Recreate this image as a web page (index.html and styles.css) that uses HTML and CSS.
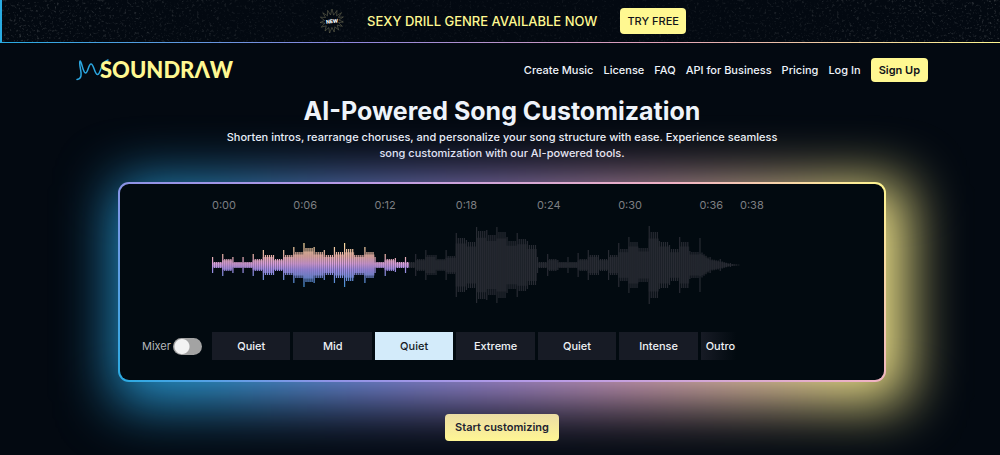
FILE: index.html
```html
<!DOCTYPE html>
<html lang="en">
<head>
  <meta charset="utf-8">
  <meta name="viewport" content="width=device-width, initial-scale=1">
  <title>Soundraw – AI-Powered Song Customization</title>
  <link rel="stylesheet" href="styles.css">
</head>
<body>
  <aside class="banner">
    <svg class="banner-stars" aria-hidden="true">
      <filter id="stars" x="0" y="0" width="100%" height="100%">
        <feTurbulence type="fractalNoise" baseFrequency="0.4" numOctaves="3" seed="8"/>
        <feColorMatrix values="0 0 0 0 0.7  0 0 0 0 0.72  0 0 0 0 0.7  2.6 1.4 0 0 -2.2"/>
      </filter>
      <rect width="100%" height="100%" filter="url(#stars)"/>
    </svg>
    <svg class="badge" viewBox="0 0 26 26" aria-label="New">
      <path d="M13 1l1.6 6.2L18 2.400l-.4 5.400 5-3.200-3.200 4.700 5-.4-4.400 3.100 4.400 2-4.900.6 3.900 3.700-5.200-1.100 1.500 4.800-3.900-3.200-.6 5.200-2.200-4.500L10.500 25l-.6-5.400L6 23l1.300-5.200-5.100 1.400 3.700-4L1 14.500l4.600-2L1.400 9.200l5.200.3L3.800 4.800l4.700 3L8.600 2.400l2.900 4.500z"/>
      <text x="13" y="15" transform="rotate(-6 13 13)">NEW</text>
    </svg>
    <p class="banner-text">SEXY DRILL GENRE AVAILABLE NOW</p>
    <button class="btn btn-banner" type="button">TRY FREE</button>
  </aside>

  <header class="header">
    <a class="logo" href="#" aria-label="Soundraw">
      <svg class="logo-wave" viewBox="0 0 34 22" aria-hidden="true">
        <path d="M1 20.500C6 20 5.500 15 4.500 10C3.500 5 3.500 2 4.200 2C5.500 2 7 14 9.500 14C12 14 12.500 5 15 5C18 5 18.500 15.500 21.500 15.500C25 15.500 24 4 32 1"/>
      </svg>
      <span class="logo-text">SOUNDRΛW</span>
    </a>
    <nav class="nav">
      <a href="#">Create Music</a>
      <a href="#">License</a>
      <a href="#">FAQ</a>
      <a href="#">API for Business</a>
      <a href="#">Pricing</a>
      <a href="#">Log In</a>
      <a class="btn btn-signup" href="#">Sign Up</a>
    </nav>
  </header>

  <main class="main">
    <h1 class="title">AI-Powered Song Customization</h1>
    <p class="lead">Shorten intros, rearrange choruses, and personalize your song structure with ease. Experience seamless song customization with our AI-powered tools.</p>

    <section class="player">
      <div class="card">
        <div class="times">
          <span>0:00</span><span>0:06</span><span>0:12</span><span>0:18</span><span>0:24</span><span>0:30</span><span>0:36</span><span>0:38</span>
        </div>
        <svg class="wave" viewBox="0 0 529 80" preserveAspectRatio="none" aria-label="Waveform">
          <defs>
            <linearGradient id="tone" gradientUnits="userSpaceOnUse" x1="0" y1="18" x2="0" y2="62">
              <stop offset="0" stop-color="#f8dc9c"/>
              <stop offset="0.3" stop-color="#eab0a8"/>
              <stop offset="0.47" stop-color="#d9a0dc"/>
              <stop offset="0.6" stop-color="#a48ee6"/>
              <stop offset="1" stop-color="#3f8fd0"/>
            </linearGradient>
          </defs>
          <path id="played-fill" class="played fill"/>
          <path id="played-bars" class="played"/>
          <path id="rest-fill" class="rest fill"/>
          <path id="rest-bars" class="rest"/>
        </svg>
        <label class="mixer">Mixer <input class="switch" type="checkbox" role="switch"></label>
        <div class="parts">
          <button class="part" type="button">Quiet</button>
          <button class="part" type="button">Mid</button>
          <button class="part part-active" type="button">Quiet</button>
          <button class="part" type="button">Extreme</button>
          <button class="part" type="button">Quiet</button>
          <button class="part" type="button">Intense</button>
          <button class="part part-last" type="button">Outro</button>
        </div>
      </div>
    </section>

    <button class="btn btn-start" type="button">Start customizing</button>
  </main>
  <script src="wave.js"></script>
</body>
</html>
```

FILE: styles.css
```css
* {
  box-sizing: border-box;
}

body {
  margin: 0;
  background: #030911;
  color: #eef3fa;
  font-family: Inter, "Liberation Sans", sans-serif;
  font-size: 11px;
  line-height: 16px;
}

a {
  color: inherit;
  text-decoration: none;
}

button {
  font: inherit;
  border: 0;
  padding: 0;
  cursor: pointer;
}

.btn {
  background: #fff891;
  color: #10131a;
  border-radius: 4px;
  text-align: center;
}

/* Announcement bar */
.banner {
  position: relative;
  display: flex;
  align-items: center;
  justify-content: center;
  padding: 8px 0 8px 3px;
  border-style: solid;
  border-width: 0 0 1px 2px;
  border-image: linear-gradient(90deg, #29abe2, #8f86dd 35%, #e0a0b8 65%, #fff68f) 1;
}

.banner-stars {
  position: absolute;
  inset: 0;
  width: 100%;
  height: 100%;
  opacity: 0.22;
  mask-image: linear-gradient(90deg, #000, rgba(0, 0, 0, 0.35) 35%, rgba(0, 0, 0, 0.35) 65%, #000);
}

.badge {
  position: relative;
  width: 26px;
  height: 26px;
  margin-right: 22px;
}

.badge path {
  fill: none;
  stroke: #77755a;
  stroke-width: 0.5;
}

.badge text {
  fill: #fff;
  font-size: 5px;
  font-weight: 800;
  text-anchor: middle;
}

.banner-text {
  position: relative;
  margin: 0 23px 0 0;
  color: #fff891;
  font-size: 13px;
  font-weight: 500;
}

.btn-banner {
  position: relative;
  padding: 5px 7px;
  font-weight: 500;
}

/* Header */
.header {
  display: flex;
  align-items: center;
  justify-content: space-between;
  padding: 15px 72px 0 76px;
}

.logo {
  display: flex;
  align-items: center;
}

.logo-wave {
  width: 34px;
  height: 22px;
  margin-right: -10px;
}

.logo-wave path {
  fill: none;
  stroke: #2ba6e0;
  stroke-width: 1.5;
  stroke-linecap: round;
}

.logo-text {
  color: #fff891;
  font-family: Lato, "Open Sans", sans-serif;
  font-size: 22px;
  font-weight: 900;
  line-height: 22px;
}

.nav {
  display: flex;
  align-items: center;
  gap: 10px;
  font-weight: 500;
}

.btn-signup {
  padding: 4px 8px;
  font-weight: 600;
}

/* Hero */
.main {
  display: flex;
  flex-direction: column;
  align-items: center;
  padding: 12px 20px 14px 24px;
  overflow: hidden;
}

.title {
  margin: 0;
  font-size: 25px;
  font-weight: 700;
  line-height: 34px;
}

.lead {
  max-width: 560px;
  margin: 1px 0 21px;
  font-weight: 500;
  text-align: center;
}

/* Player */
.player {
  position: relative;
  isolation: isolate;
  width: 100%;
  max-width: 768px;
  margin-bottom: 32px;
}

.player::before {
  content: "";
  position: absolute;
  z-index: -1;
  inset: 0 -22px -22px -4px;
  border-radius: 12px;
  background: linear-gradient(90deg, #2191c9, #2f95cf 12%, #7a8ce0 32%, #ab90dc 48%, #d9a3c0 65%, #e8c3a4 80%, #f0e488 94%);
  filter: blur(28px);
}

.card {
  display: grid;
  grid-template-columns: 60px minmax(0, 1fr);
  column-gap: 10px;
  padding: 13px 144px 20px 22px;
  border: 2px solid transparent;
  border-radius: 11px;
  background:
    linear-gradient(#020a10, #020a10) padding-box,
    linear-gradient(45deg, #29abe2, #8f93e6 22%, #b99be6 45%, #efb2c4 78%, #fff68f) border-box;
}

.times,
.parts {
  display: grid;
  grid-column: 2;
}

.times {
  grid-template-columns: repeat(6, minmax(0, 2fr)) minmax(0, 1fr) 0;
  margin-bottom: 12px;
  color: #7d7f82;
  white-space: nowrap;
}

.wave {
  grid-column: 2;
  width: 100%;
  height: 80px;
  margin-bottom: 27px;
}

.played {
  fill: url(#tone);
}

.rest {
  fill: #282b33;
}

.fill {
  opacity: 0.65;
}

.mixer {
  display: flex;
  align-items: center;
  justify-content: space-between;
  color: #b5b7ba;
}

.switch {
  appearance: none;
  width: 29px;
  height: 17px;
  margin: 0;
  border-radius: 9px;
  background: radial-gradient(circle at 9px 50%, #f2f2f2 7px, transparent 8px), #a3a3a3;
  cursor: pointer;
}

.switch:checked {
  background: radial-gradient(circle at 20px 50%, #f2f2f2 7px, transparent 8px), #29abe2;
}

.parts {
  grid-template-columns: repeat(6, minmax(0, 2fr)) minmax(0, 1fr);
  column-gap: 3px;
}

.part {
  padding: 6px 0;
  background: #171b25;
  color: #eef1f5;
  font-weight: 500;
}

.part-active {
  background: #d3ebfa;
  color: #171b25;
}

.part-last {
  background: linear-gradient(90deg, #171b25, #020a10 90%);
}

.btn-start {
  position: relative;
  padding: 5px 10px 6px;
  background: linear-gradient(#ebdca4, #fff694);
  color: #1d1f33;
  font-weight: 600;
}
```

FILE: wave.js
```js
// One entry per beat: height of the first bar, then height of the others.
const beats = [
  [8, 3], [11, 6], [8, 3], [8, 3], [11, 6], [15, 10], [10, 6], [15, 10],
  [18, 13], [22, 17], [18, 13], [15, 10], [18, 13], [22, 16], [10, 10], [18, 13],
  [8, 3], [11, 6], [7, 3], [8, 3], [11, 6], [15, 10], [10, 6], [15, 9],
  [32, 27], [25, 23], [38, 34], [35, 30], [38, 33], [28, 24], [32, 26], [24, 20],
  [8, 3], [11, 6], [5, 3], [8, 3], [12, 6], [15, 10], [10, 6], [15, 10],
  [22, 16], [28, 23], [17, 17], [39, 33], [24, 23], [20, 16], [28, 23], [14, 13],
  [27, 14], [8, 6], [6, 4], [2, 1]
];
const playedBeats = 19.4;
const barsPerBeat = 5;
const step = 529 / 52 / barsPerBeat;
const middle = 40;
const shapes = { played: { bars: "", fill: "" }, rest: { bars: "", fill: "" } };

const box = (x, w, h) => `M${x} ${middle - h}h${w}v${2 * h}h${-w}z`;

beats.forEach(([peak, body], beat) => {
  const next = beats[beat + 1] ? beats[beat + 1][1] : 0;
  for (let i = 0; i < barsPerBeat; i++) {
    const x = (beat * barsPerBeat + i) * step;
    const side = beat + i / barsPerBeat < playedBeats ? shapes.played : shapes.rest;
    // The outro fades evenly instead of holding each beat's level.
    const level = beat >= 48 ? body + (next - body) * i / barsPerBeat : body;
    side.bars += box(x, 1.2, i === 0 ? peak : level);
    side.fill += box(x, step, level * 0.8);
  }
});

for (const name of ["played", "rest"]) {
  for (const kind of ["bars", "fill"]) {
    document.getElementById(`${name}-${kind}`).setAttribute("d", shapes[name][kind]);
  }
}
```
